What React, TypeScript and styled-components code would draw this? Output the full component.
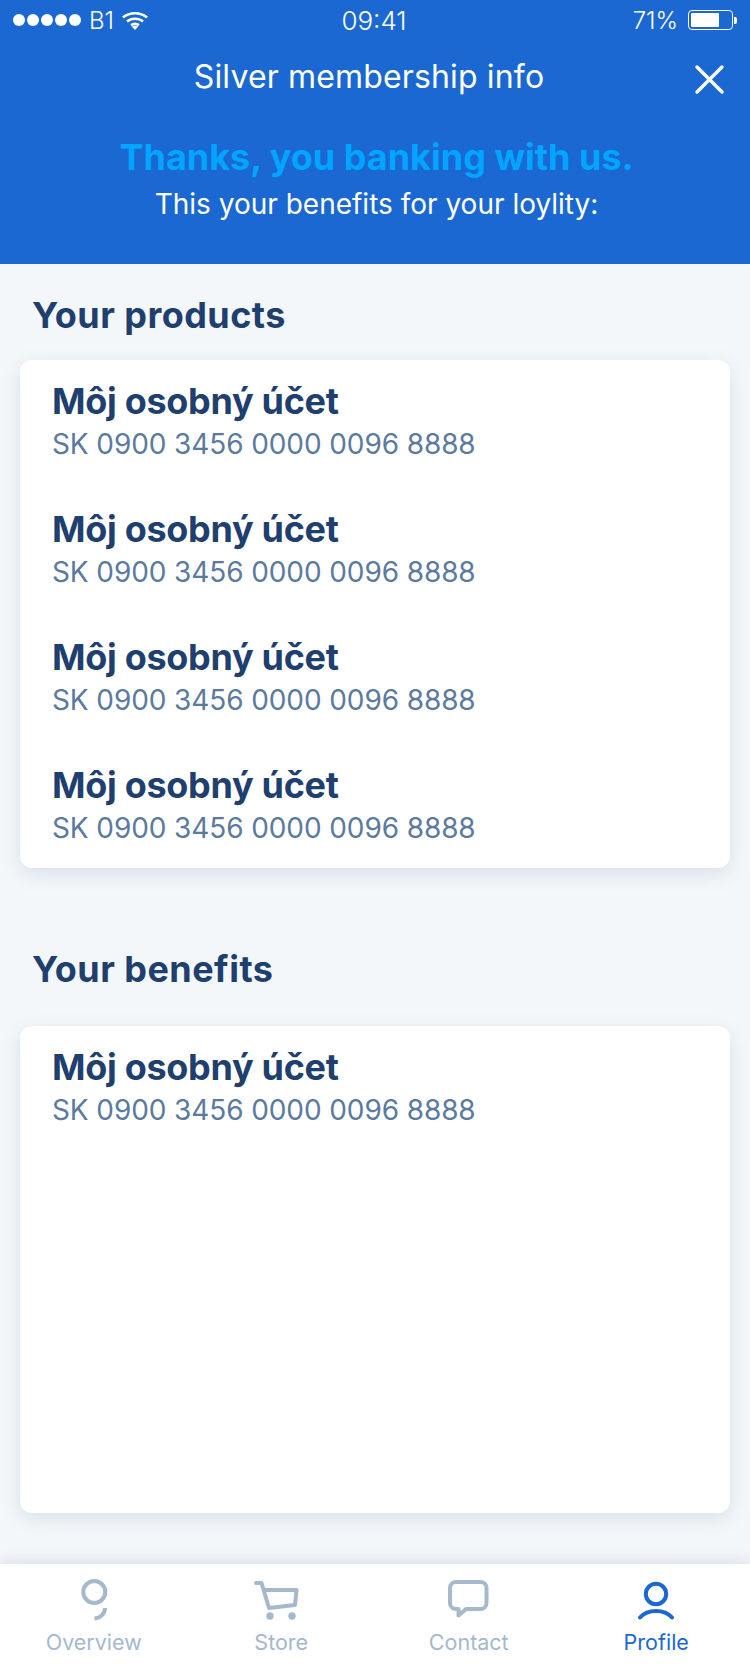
import React from 'react';
import styled, { createGlobalStyle } from 'styled-components';

const GlobalStyle = createGlobalStyle`
  html, body {
    margin: 0;
    padding: 0;
    background: #f4f7fa;
    font-family: 'Inter', 'Liberation Sans', sans-serif;
  }
  * { box-sizing: border-box; }
`;

const Page = styled.div`
  width: 750px;
  height: 1664px;
  display: flex;
  flex-direction: column;
  overflow: hidden;
  background: #f4f7fa;
`;

const Header = styled.header`
  height: 264px;
  flex-shrink: 0;
  background: #1b68d3;
  color: #fff;
  text-align: center;
`;

const StatusBar = styled.div`
  height: 40px;
  padding: 0 13px;
  display: grid;
  grid-template-columns: 1fr auto 1fr;
  align-items: center;
  font-size: 24px;
  font-weight: 300;
`;

const StatusLeft = styled.div`
  display: flex;
  align-items: center;
  gap: 8px;
`;

const Dots = styled.div`
  display: flex;
  gap: 2px;
`;

const Dot = styled.span`
  width: 12px;
  height: 12px;
  border-radius: 50%;
  background: #fff;
`;

const Clock = styled.span`
  font-size: 26px;
  margin-left: -2px;
`;

const StatusRight = styled.div`
  display: flex;
  align-items: center;
  justify-content: flex-end;
  gap: 10px;
`;

const Battery = styled.div`
  display: flex;
  align-items: center;
  gap: 1px;
`;

const BatteryBody = styled.div`
  width: 45px;
  height: 20px;
  padding: 2px;
  border: 1px solid #fff;
  border-radius: 4px;
`;

const BatteryFill = styled.div`
  width: 71%;
  height: 100%;
  background: #fff;
  border-radius: 1px;
`;

const BatteryCap = styled.div`
  width: 3px;
  height: 7px;
  background: #fff;
  border-radius: 0 2px 2px 0;
`;

const TitleRow = styled.div`
  position: relative;
  height: 72px;
  padding-right: 12px;
  display: flex;
  align-items: center;
  justify-content: center;
  font-size: 32px;
  letter-spacing: 0.15px;
`;

const CloseButton = styled.div`
  position: absolute;
  right: 25px;
  top: 24px;
  width: 31px;
  height: 31px;
  display: flex;
`;

const Thanks = styled.div`
  margin-top: 23px;
  padding-left: 3px;
  font-size: 36px;
  line-height: 44px;
  font-weight: 700;
  color: #00a5ff;
`;

const Loyalty = styled.div`
  margin-top: 5px;
  padding-left: 3px;
  font-size: 28px;
  line-height: 40px;
`;

const Content = styled.main`
  flex: 1;
  padding: 0 20px;
`;

const SectionTitle = styled.h2<{ $top: number }>`
  margin: ${(p) => p.$top}px 0 0 12px;
  height: 40px;
  font-size: 36px;
  line-height: 40px;
  font-weight: 700;
  letter-spacing: 0.45px;
  color: #1f3f6e;
`;

const Card = styled.section<{ $top: number; $height: number }>`
  margin-top: ${(p) => p.$top}px;
  height: ${(p) => p.$height}px;
  padding: 20px 32px 0;
  background: #fff;
  border-radius: 12px;
  box-shadow: 0 6px 20px rgba(60, 90, 130, 0.14);
`;

const Account = styled.div`
  height: 128px;
`;

const AccountName = styled.div`
  font-size: 36px;
  line-height: 42px;
  font-weight: 700;
  letter-spacing: -0.3px;
  color: #1f3f6e;
`;

const AccountNumber = styled.div`
  margin-top: 2px;
  font-size: 28px;
  line-height: 40px;
  letter-spacing: -0.1px;
  color: #5b7a9f;
`;

const TabBar = styled.nav`
  height: 100px;
  flex-shrink: 0;
  display: grid;
  grid-template-columns: repeat(4, 1fr);
  background: #fff;
  box-shadow: 0 -4px 14px rgba(60, 80, 110, 0.12);
`;

const Tab = styled.div<{ $active?: boolean }>`
  display: flex;
  flex-direction: column;
  align-items: center;
  padding-top: 12px;
  color: ${(p) => (p.$active ? '#1b68d3' : '#a5b8ce')};
  font-size: 21.5px;
  line-height: 32px;
`;

const TabIcon = styled.svg`
  width: 48px;
  height: 48px;
  display: block;
  margin-bottom: 2px;
  overflow: visible;
`;

const accounts = [0, 1, 2, 3];

const AccountRow = () => (
  <Account>
    <AccountName>Môj osobný účet</AccountName>
    <AccountNumber>SK 0900 3456 0000 0096 8888</AccountNumber>
  </Account>
);

export default function App() {
  return (
    <Page>
      <GlobalStyle />
      <Header>
        <StatusBar>
          <StatusLeft>
            <Dots>
              {[0, 1, 2, 3, 4].map((i) => (
                <Dot key={i} />
              ))}
            </Dots>
            <span>B1</span>
            <svg width="26" height="19" viewBox="0 0 26 19" fill="none" stroke="#fff" strokeWidth="2.600">
              <path d="M1 6.500C7.500 .8 18.500 .8 25 6.500" />
              <path d="M5 10.500C9.500 6.800 16.500 6.800 21 10.500" />
              <path d="M9 14.200C11.500 12.500 14.500 12.500 17 14.200" />
              <path d="M13 19l-3.400-3.400c2-1.200 4.800-1.200 6.800 0z" fill="#fff" stroke="none" />
            </svg>
          </StatusLeft>
          <Clock>09:41</Clock>
          <StatusRight>
            <span>71%</span>
            <Battery>
              <BatteryBody>
                <BatteryFill />
              </BatteryBody>
              <BatteryCap />
            </Battery>
          </StatusRight>
        </StatusBar>
        <TitleRow>
          Silver membership info
          <CloseButton>
            <svg width="31" height="31" viewBox="0 0 31 31" stroke="#fff" strokeWidth="3.400" strokeLinecap="round">
              <path d="M3 3l25 25M28 3L3 28" />
            </svg>
          </CloseButton>
        </TitleRow>
        <Thanks>Thanks, you banking with us.</Thanks>
        <Loyalty>This your benefits for your loylity:</Loyalty>
      </Header>
      <Content>
        <SectionTitle $top={31}>Your products</SectionTitle>
        <Card $top={25} $height={508}>
          {accounts.map((i) => (
            <AccountRow key={i} />
          ))}
        </Card>
        <SectionTitle $top={81}>Your benefits</SectionTitle>
        <Card $top={37} $height={487}>
          <AccountRow />
        </Card>
      </Content>
      <TabBar>
        <Tab>
          <TabIcon viewBox="0 0 48 48" fill="none" stroke="currentColor" strokeWidth="4">
            <circle cx="24.250" cy="16" r="11" />
            <path d="M35 32c0 5.500-4.500 10-10.500 10.500" />
          </TabIcon>
          Overview
        </Tab>
        <Tab>
          <TabIcon viewBox="0 0 48 48" fill="none" stroke="currentColor" strokeWidth="4" strokeLinecap="round" strokeLinejoin="round">
            <path d="M-1 7h5.500L12 32l26-3 1.500-15H6.500" />
            <circle cx="13" cy="40" r="3.700" fill="currentColor" stroke="none" />
            <circle cx="35" cy="40" r="3.700" fill="currentColor" stroke="none" />
          </TabIcon>
          Store
        </Tab>
        <Tab>
          <TabIcon viewBox="0 0 48 48" fill="none" stroke="currentColor" strokeWidth="4" strokeLinejoin="round">
            <path d="M11 6h24.500a6 6 0 0 1 6 6v15a6 6 0 0 1-6 6H21l-7.500 6.500V33H11a6 6 0 0 1-6-6V12a6 6 0 0 1 6-6z" />
          </TabIcon>
          Contact
        </Tab>
        <Tab $active>
          <TabIcon viewBox="0 0 48 48" fill="none" stroke="currentColor" strokeWidth="4" strokeLinecap="round">
            <circle cx="24" cy="18" r="10.200" />
            <path d="M8 41.500C12 37 18 35 24 35s12 2 16 6.500" />
          </TabIcon>
          Profile
        </Tab>
      </TabBar>
    </Page>
  );
}
